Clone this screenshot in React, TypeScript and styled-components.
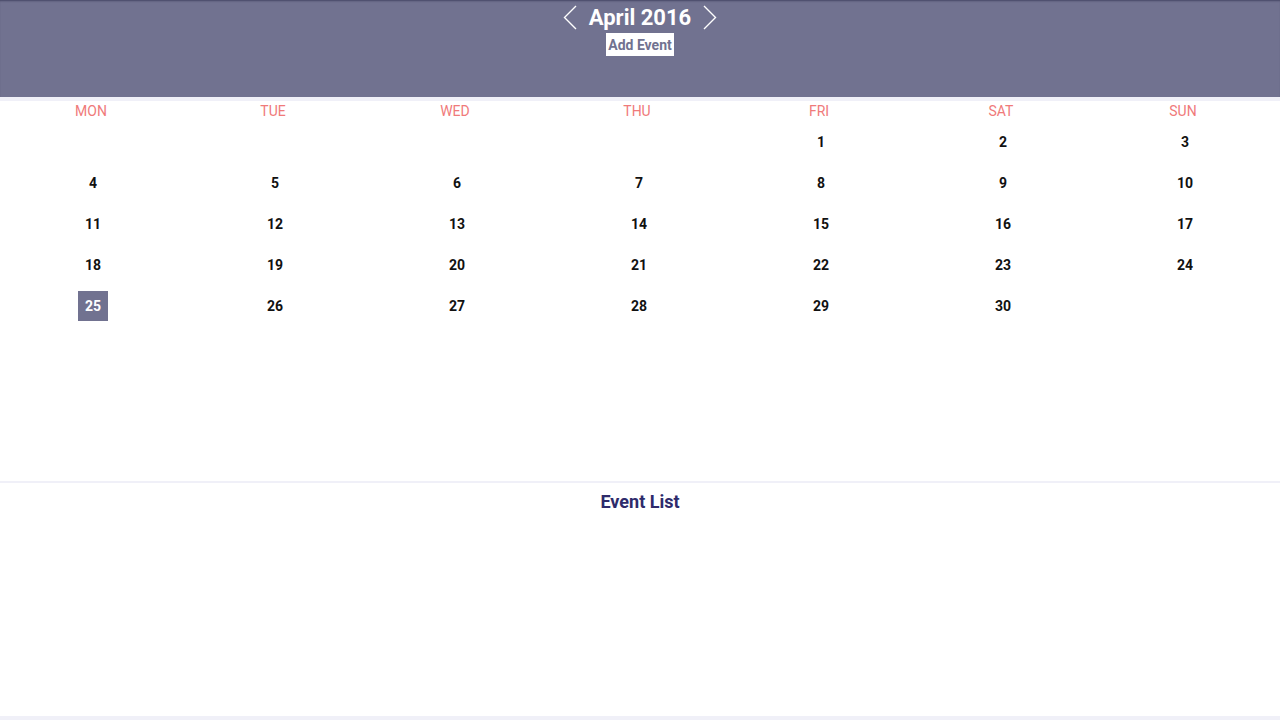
import React from "react";
import styled, { createGlobalStyle } from "styled-components";

const Global = createGlobalStyle`
  html, body { margin: 0; padding: 0; background: #ffffff; }
  body { font-family: Roboto, "Noto Sans", "Liberation Sans", sans-serif; }
  * { box-sizing: border-box; }
`;

const Page = styled.div`
  width: 1280px;
  height: 720px;
  display: flex;
  flex-direction: column;
  background: #ffffff;
  overflow: hidden;
`;

const Header = styled.header`
  height: 97px;
  background: #717290;
  box-shadow: inset 0 2px 2px -1px rgba(40, 40, 70, 0.6);
  display: flex;
  flex-direction: column;
  align-items: center;
  padding-top: 4px;
`;

const TitleRow = styled.div`
  display: flex;
  align-items: center;
  gap: 12px;
  height: 27px;
`;

const Title = styled.h1`
  margin: 0;
  font-size: 22px;
  font-weight: 700;
  color: #ffffff;
  line-height: 27px;
`;

const NavButton = styled.button`
  border: none;
  background: transparent;
  padding: 0;
  width: 14px;
  height: 25px;
  display: flex;
  align-items: center;
  justify-content: center;
  cursor: pointer;
`;

const AddEvent = styled.button`
  margin-top: 2px;
  border: none;
  background: #ffffff;
  color: #717290;
  font-family: Roboto, "Liberation Sans", sans-serif;
  font-weight: 700;
  font-size: 14px;
  height: 23px;
  padding: 0 2px;
  cursor: pointer;
`;

const Strip = styled.div`
  height: 4px;
  background: #f0f0f8;
`;

const Calendar = styled.section`
  height: 380px;
  width: 1274px;
`;

const Grid = styled.div`
  display: grid;
  grid-template-columns: repeat(7, 182px);
`;

const DayName = styled.div`
  height: 20px;
  display: flex;
  align-items: center;
  justify-content: center;
  color: #f07a7a;
  font-size: 14px;
`;

const DateCell = styled.div`
  height: 41px;
  display: flex;
  align-items: center;
  justify-content: center;
  padding-left: 4px;
`;

const DateNum = styled.span<{ $today?: boolean }>`
  width: 30px;
  height: 30px;
  display: flex;
  align-items: center;
  justify-content: center;
  font-size: 14px;
  font-weight: 700;
  color: ${(p) => (p.$today ? "#ffffff" : "#111111")};
  background: ${(p) => (p.$today ? "#717290" : "transparent")};
`;

const Divider = styled.div`
  height: 2px;
  background: #f0f0f8;
`;

const EventSection = styled.section`
  flex: 1;
  display: flex;
  flex-direction: column;
  align-items: center;
  padding-top: 7px;
`;

const EventTitle = styled.h2`
  margin: 0;
  font-size: 18px;
  font-weight: 700;
  color: #2e2b6b;
  line-height: 24px;
`;

const Bottom = styled.div`
  height: 4px;
  background: #f0f0f8;
`;

const Chevron = ({ dir }: { dir: "left" | "right" }) => (
  <svg width="14" height="25" viewBox="0 0 14 25">
    <path
      d={dir === "left" ? "M13 1 L1.5 12.5 L13 24" : "M1 1 L12.5 12.5 L1 24"}
      fill="none"
      stroke="#ffffff"
      strokeWidth="1.4"
    />
  </svg>
);

const days = ["MON", "TUE", "WED", "THU", "FRI", "SAT", "SUN"];

export default function App() {
  const cells: (number | null)[] = [null, null, null, null];
  for (let d = 1; d <= 30; d++) cells.push(d);
  while (cells.length % 7) cells.push(null);

  return (
    <Page>
      <Global />
      <Header>
        <TitleRow>
          <NavButton aria-label="Previous month">
            <Chevron dir="left" />
          </NavButton>
          <Title>April 2016</Title>
          <NavButton aria-label="Next month">
            <Chevron dir="right" />
          </NavButton>
        </TitleRow>
        <AddEvent>Add Event</AddEvent>
      </Header>
      <Strip />
      <Calendar>
        <Grid>
          {days.map((d) => (
            <DayName key={d}>{d}</DayName>
          ))}
          {cells.map((c, i) => (
            <DateCell key={i}>
              {c !== null && <DateNum $today={c === 25}>{c}</DateNum>}
            </DateCell>
          ))}
        </Grid>
      </Calendar>
      <Divider />
      <EventSection>
        <EventTitle>Event List</EventTitle>
      </EventSection>
      <Bottom />
    </Page>
  );
}
